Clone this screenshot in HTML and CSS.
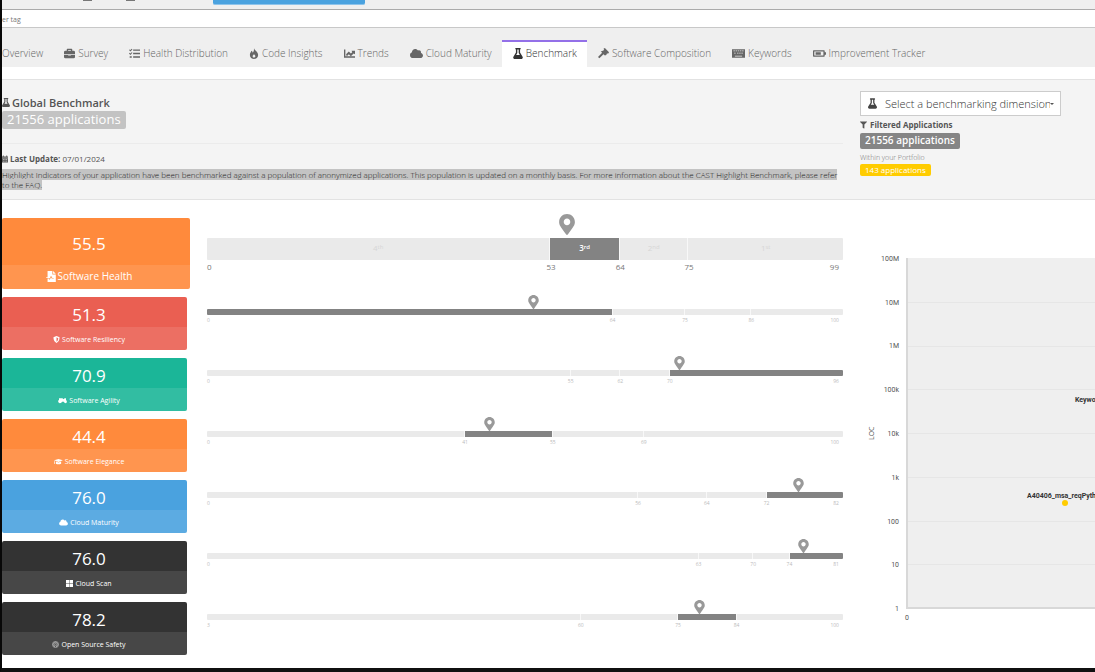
FILE: index.html
```html
<!DOCTYPE html>
<html lang="en">
<head>
    <meta charset="UTF-8">
    <meta name="viewport" content="width=device-width, initial-scale=1.0">
    <title>Benchmark</title>
    <link rel="stylesheet" href="styles.css">
</head>
<body>
  <!-- icons -->
  <svg class="sprite" aria-hidden="true">
    <symbol id="flask" viewBox="0 0 448 512"><path d="M437.2 403.5L320 215V64h8c13.3 0 24-10.7 24-24V24c0-13.3-10.7-24-24-24H120c-13.3 0-24 10.7-24 24v16c0 13.3 10.7 24 24 24h8v151L10.8 403.5C-18.5 450.6 15.3 512 70.9 512h306.2c55.7 0 89.4-61.5 60.1-108.5zM137.9 320l48.2-77.6c3.7-5.2 5.8-11.6 5.8-18.4V64h64v160c0 6.9 2.2 13.2 5.8 18.4l48.2 77.6h-172z"/></symbol>
    <symbol id="cloud" viewBox="0 0 640 512"><path d="M537.6 226.6c4.1-10.7 6.4-22.4 6.4-34.6 0-53-43-96-96-96-19.7 0-38.1 6-53.3 16.2C367 64.2 315.3 32 256 32c-88.4 0-160 71.6-160 160 0 2.7.1 5.4.2 8.1C40.2 219.8 0 273.2 0 336c0 79.5 64.5 144 144 144h368c70.7 0 128-57.3 128-128 0-61.9-44-113.6-102.4-125.4z"/></symbol>
    <symbol id="pin" viewBox="0 0 384 512"><path d="M172.268 501.67C26.97 291.031 0 269.413 0 192 0 85.961 85.961 0 192 0s192 85.961 192 192c0 77.413-26.97 99.031-172.268 309.67-9.535 13.774-29.93 13.773-39.464 0zM192 272c44.183 0 80-35.817 80-80s-35.817-80-80-80-80 35.817-80 80 35.817 80 80 80z"/></symbol>
    <symbol id="filter" viewBox="0 0 512 512"><path d="M487.976 0H24.028C2.71 0-8.047 25.866 7.058 40.971L192 225.941V432c0 7.831 3.821 15.17 10.237 19.662l80 55.98C298.02 518.69 320 507.493 320 487.98V225.941l184.947-184.97C520.021 25.896 509.338 0 487.976 0z"/></symbol>
    <symbol id="briefcase" viewBox="0 0 16 16"><path fill-rule="evenodd" d="M4 4V2q0-1 1-1h6q1 0 1 1v2h2q2 0 2 2v3H0V6q0-2 2-2zM6 4h4V3H6zM0 10h6v1h4v-1h6v3q0 2-2 2H2q-2 0-2-2z"/></symbol>
    <symbol id="tasks" viewBox="0 0 16 16"><path d="M6 2h10v2H6zM6 7h10v2H6zM6 12h10v2H6zM0 3l1-1 1 1 2-2 1 1-3 3zM0 8l1-1 1 1 2-2 1 1-3 3zM1 12h3v2H1z"/></symbol>
    <symbol id="fire" viewBox="0 0 14 16"><path fill-rule="evenodd" d="M7 0c0 3 6 5 6 10 0 4-3 6-6 6s-6-2-6-6c0-3 2-4 2-6 2 1 2 2 2 3 2-2 2-4 2-7zM7 9c-1 1-2 2-2 3 0 3 4 2 4 0 0-1-1-2-2-3z"/></symbol>
    <symbol id="trend" viewBox="0 0 16 16"><path d="M0 2h2v10h14v2H0zM3 9l4-4 3 3 2-2-1-2h5v5l-2-1-4 4-3-3-3 3z"/></symbol>
    <symbol id="hammer" viewBox="0 0 16 16"><path d="M8 1l2-1 6 6-1 2h-2l-1 2-2 1-2-2-6 6-2-2 6-6-2-2 3-1 2-1z"/></symbol>
    <symbol id="keyboard" viewBox="0 0 18 14"><path fill-rule="evenodd" d="M0 1h18v12H0zM2 3v1h2V3zM5 3v1h2V3zM8 3v1h2V3zM11 3v1h2V3zM14 3v1h2V3zM3 6v1h2V6zM7 6v1h2V6zM10 6v1h2V6zM13 6v1h2V6zM4 10v1h10v-1z"/></symbol>
    <symbol id="battery" viewBox="0 0 20 16"><path fill-rule="evenodd" d="M1 3h16q1 0 1 1v2h2v4h-2v2q0 1-1 1H1q-1 0-1-1V4q0-1 1-1zM2 5v6h14V5zM4 6h8v4H4z"/></symbol>
    <symbol id="calendar" viewBox="0 0 14 16"><path fill-rule="evenodd" d="M2 0h2v2h6V0h2v2h2v3H0V2h2zM0 6h14v10H0zM2 8v2h2V8zM6 8v2h2V8zM10 8v2h2V8zM2 12v2h2v-2zM6 12v2h2v-2zM10 12v2h2v-2z"/></symbol>
    <symbol id="report" viewBox="0 0 14 16"><path fill-rule="evenodd" d="M2 0h7v5h5v11H2v-5h2l1 2 2-4 1 2h3v-1H9L7 7l-2 4-1-1H0V9h2zM10 0l4 4h-4z"/></symbol>
    <symbol id="shield" viewBox="0 0 16 16"><path fill-rule="evenodd" d="M8 0l7 3c0 7-3 11-7 13C4 14 1 10 1 3zM8 3v10c3-2 4-5 4-8z"/></symbol>
    <symbol id="bike" viewBox="0 0 20 16"><path d="M2 3h8l2 2 3-2h3v4q2 1 2 4 0 3-3 3-3 0-4-3H9q-1 3-5 3-4-1-4-4 0-3 2-4z"/></symbol>
    <symbol id="cap" viewBox="0 0 20 16"><path d="M0 5l10-3 10 3-10 4zM4 8l6 2 6-2v5q-6 3-12 0zM1 6h1v7H0z"/></symbol>
    <symbol id="scan" viewBox="0 0 16 16"><path d="M0 0h7v7H0zM8 0h8v7H8zM0 8h7v8H0zM8 8h8v8H8z"/></symbol>
    <symbol id="safety" viewBox="0 0 16 16"><circle cx="8" cy="8" r="7" fill="none" stroke="currentColor" stroke-width="1"/><path d="M6 13l1-4a2 2 0 1 1 2 0l1 4 2-2a5 5 0 1 0-8 0z" fill="none" stroke="currentColor" stroke-width="1"/></symbol>
  </svg>

  <header class="topbar">
    <svg class="stub first" viewBox="0 0 9 2"><path d="M0 0h9v1H0z"/></svg>
    <svg class="stub" viewBox="0 0 9 2"><path d="M0 0h9v1H0z"/></svg>
    <button class="top-button" type="button" aria-label="Portfolio"></button>
  </header>

  <input class="tag-filter" type="text" placeholder="er tag" aria-label="Filter per tag">

  <nav class="tabs">
    <a href="#" class="first">Overview</a>
    <a href="#"><svg><use href="#briefcase"/></svg>Survey</a>
    <a href="#"><svg><use href="#tasks"/></svg>Health Distribution</a>
    <a href="#"><svg class="narrow"><use href="#fire"/></svg>Code Insights</a>
    <a href="#"><svg><use href="#trend"/></svg>Trends</a>
    <a href="#"><svg class="wide"><use href="#cloud"/></svg>Cloud Maturity</a>
    <a href="#" class="active"><svg class="narrow"><use href="#flask"/></svg>Benchmark</a>
    <a href="#"><svg><use href="#hammer"/></svg>Software Composition</a>
    <a href="#"><svg class="wide"><use href="#keyboard"/></svg>Keywords</a>
    <a href="#"><svg class="wide"><use href="#battery"/></svg>Improvement Tracker</a>
  </nav>

  <section class="intro columns">
    <div class="intro-main">
      <h1><svg><use href="#flask"/></svg>Global Benchmark</h1>
      <span class="badge light">21556 applications</span>
      <hr>
      <p class="update"><svg><use href="#calendar"/></svg><b>Last Update:</b> 07/01/2024</p>
      <p class="about"><mark>Highlight Indicators of your application have been benchmarked against a population of anonymized applications. This population is updated on a monthly basis. For more information about the CAST Highlight Benchmark, please refer to the FAQ.</mark></p>
    </div>
    <div class="intro-side">
      <div class="dimension">
        <svg><use href="#flask"/></svg>
        <select aria-label="Benchmarking dimension">
          <option>Select a benchmarking dimension</option>
        </select>
        <i class="caret"></i>
      </div>
      <h2><svg><use href="#filter"/></svg>Filtered Applications</h2>
      <span class="badge strong">21556 applications</span>
      <p class="within">Within your Portfolio</p>
      <span class="badge yellow">143 applications</span>
    </div>
  </section>

  <main class="columns">
    <div class="scores">
      <div class="row health">
        <div class="tile orange"><strong>55.5</strong><span><svg><use href="#report"/></svg>Software Health</span></div>
        <div class="gauge">
          <svg class="pin" style="left: 56.6%"><use href="#pin"/></svg>
          <div class="bar"><i style="width: 54%">4<sup>th</sup></i><i class="on" style="width: 10.9%">3<sup>rd</sup></i><i style="width: 10.8%">2<sup>nd</sup></i><i style="width: 24.3%">1<sup>st</sup></i></div>
          <div class="scale"><span style="width: 54%">0</span><span style="width: 10.9%">53</span><span style="width: 10.8%">64</span><span style="width: 24.3%">75<b>99</b></span></div>
        </div>
      </div>
      <div class="row">
        <div class="tile red"><strong>51.3</strong><span><svg><use href="#shield"/></svg>Software Resiliency</span></div>
        <div class="gauge">
          <svg class="pin" style="left: 51.4%"><use href="#pin"/></svg>
          <div class="bar"><i class="on" style="width: 63.8%"></i><i style="width: 11.4%"></i><i style="width: 10.4%"></i><i style="width: 14.4%"></i></div>
          <div class="scale"><span style="width: 63.8%">0</span><span style="width: 11.4%">64</span><span style="width: 10.4%">75</span><span style="width: 14.4%">86<b>100</b></span></div>
        </div>
      </div>
      <div class="row">
        <div class="tile green"><strong>70.9</strong><span><svg class="wide"><use href="#bike"/></svg>Software Agility</span></div>
        <div class="gauge">
          <svg class="pin" style="left: 74.4%"><use href="#pin"/></svg>
          <div class="bar"><i style="width: 57.2%"></i><i style="width: 7.8%"></i><i style="width: 7.8%"></i><i class="on" style="width: 27.2%"></i></div>
          <div class="scale"><span style="width: 57.2%">0</span><span style="width: 7.8%">55</span><span style="width: 7.8%">62</span><span style="width: 27.2%">70<b>96</b></span></div>
        </div>
      </div>
      <div class="row">
        <div class="tile orange"><strong>44.4</strong><span><svg class="wide"><use href="#cap"/></svg>Software Elegance</span></div>
        <div class="gauge">
          <svg class="pin" style="left: 44.5%"><use href="#pin"/></svg>
          <div class="bar"><i style="width: 40.6%"></i><i class="on" style="width: 13.8%"></i><i style="width: 14.3%"></i><i style="width: 31.3%"></i></div>
          <div class="scale"><span style="width: 40.6%">0</span><span style="width: 13.8%">41</span><span style="width: 14.3%">55</span><span style="width: 31.3%">69<b>100</b></span></div>
        </div>
      </div>
      <div class="row">
        <div class="tile blue"><strong>76.0</strong><span><svg class="wide"><use href="#cloud"/></svg>Cloud Maturity</span></div>
        <div class="gauge">
          <svg class="pin" style="left: 93.1%"><use href="#pin"/></svg>
          <div class="bar"><i style="width: 67.8%"></i><i style="width: 10.8%"></i><i style="width: 9.4%"></i><i class="on" style="width: 12%"></i></div>
          <div class="scale"><span style="width: 67.8%">0</span><span style="width: 10.8%">56</span><span style="width: 9.4%">64</span><span style="width: 12%">72<b>82</b></span></div>
        </div>
      </div>
      <div class="row">
        <div class="tile dark"><strong>76.0</strong><span><svg><use href="#scan"/></svg>Cloud Scan</span></div>
        <div class="gauge">
          <svg class="pin" style="left: 93.8%"><use href="#pin"/></svg>
          <div class="bar"><i style="width: 77.3%"></i><i style="width: 8.6%"></i><i style="width: 5.7%"></i><i class="on" style="width: 8.4%"></i></div>
          <div class="scale"><span style="width: 77.3%">0</span><span style="width: 8.6%">63</span><span style="width: 5.7%">70</span><span style="width: 8.4%">74<b>81</b></span></div>
        </div>
      </div>
      <div class="row">
        <div class="tile dark"><strong>78.2</strong><span><svg><use href="#safety"/></svg>Open Source Safety</span></div>
        <div class="gauge">
          <svg class="pin" style="left: 77.5%"><use href="#pin"/></svg>
          <div class="bar"><i style="width: 58.8%"></i><i style="width: 15.3%"></i><i class="on" style="width: 9.2%"></i><i style="width: 16.7%"></i></div>
          <div class="scale"><span style="width: 58.8%">3</span><span style="width: 15.3%">60</span><span style="width: 9.2%">75</span><span style="width: 16.7%">84<b>100</b></span></div>
        </div>
      </div>
    </div>

    <svg class="chart" role="img" aria-label="LOC chart">
      <rect class="plot" x="47" y="40" width="100%" height="350"/>
      <g class="grid">
        <path d="M47 84.500h2000M47 128.500h2000M47 171.500h2000M47 215.500h2000M47 259.500h2000M47 303.500h2000M47 346.500h2000"/>
      </g>
      <path class="axis" d="M47 40v350h2000"/>
      <g class="ticks">
        <text x="39" y="43">100M</text>
        <text x="39" y="87">10M</text>
        <text x="39" y="130">1M</text>
        <text x="39" y="174">100k</text>
        <text x="39" y="218">10k</text>
        <text x="39" y="262">1k</text>
        <text x="39" y="306">100</text>
        <text x="39" y="349">10</text>
        <text x="39" y="393">1</text>
        <text x="49" y="402">0</text>
      </g>
      <text class="axis-name" transform="translate(14 222) rotate(-90)">LOC</text>
      <g class="points">
        <text x="215" y="184">Keywords</text>
        <text x="167" y="280">A40406_msa_reqPython</text>
        <circle cx="205" cy="285" r="3"/>
      </g>
    </svg>
  </main>
</body>
</html>
```
FILE: styles.css
```css
*{
    box-sizing: border-box;
}
body{
    margin: 0;
    min-height: 100vh;
    border-left: 2px solid #080808;
    border-bottom: 4px solid #101010;
    background-color: #fff;
    color: #555;
    font-family: "Open Sans", sans-serif;
    font-size: 11px;
    overflow-x: hidden;
}
h1, h2, p{
    margin: 0;
}
svg{
    fill: currentColor;
    flex: none;
}
.sprite{
    display: none;
}

/* top bar */
.topbar{
    display: flex;
    align-items: flex-start;
    height: 10px;
    background-color: #efefef;
    border-bottom: 1px solid #aaa;
}
.stub{
    width: 9px;
    height: 2px;
    margin-right: 34px;
    color: #777;
}
.stub.first{
    margin-left: 81px;
}
.stub + .top-button{
    margin-left: 44px;
}
.top-button{
    width: 152px;
    height: 5px;
    padding: 0;
    border: none;
    border-bottom: 1px solid #8dc3ea;
    border-radius: 0 0 2px 2px;
    background-color: #4aa2df;
}
.tag-filter{
    display: block;
    width: 100%;
    height: 18px;
    padding: 2px 0 0;
    border: none;
    border-bottom: 1px solid #c8c8c8;
    font-family: inherit;
    font-size: 7px;
    color: #777;
}
.tag-filter::placeholder{
    color: #777;
}

/* tabs */
.tabs{
    display: flex;
    height: 39px;
    padding-top: 12px;
    background-color: #efefef;
    font-size: 10px;
    white-space: nowrap;
}
.tabs a{
    display: flex;
    align-items: center;
    gap: 3px;
    padding: 0 10px 3px 11px;
    border-top: 2px solid transparent;
    color: #666;
    font-weight: 300;
    text-decoration: none;
}
.tabs a.first{
    padding-left: 0;
}
.tabs a.active{
    border-top-color: #9370e8;
    background-color: #fff;
    color: #333;
}
.tabs svg{
    width: 11px;
    height: 11px;
}
.tabs svg.narrow{
    width: 10px;
}
.tabs svg.wide{
    width: 13px;
}

.columns{
    display: grid;
    grid-template-columns: minmax(0, 1fr) 235px;
    column-gap: 17px;
}

/* intro panel */
.intro{
    height: 121px;
    margin-top: 12px;
    border-top: 1px solid #e2e2e2;
    border-bottom: 1px solid #e2e2e2;
    background-color: #f4f4f4;
}
.intro-main{
    padding-top: 15px;
}
.intro h1{
    display: flex;
    align-items: center;
    gap: 2px;
    height: 16px;
    padding-bottom: 2px;
    font-size: 11px;
    font-weight: 600;
}
.intro h1 svg{
    width: 8px;
    height: 11px;
}
.badge{
    display: block;
    width: fit-content;
    height: 16px;
    padding: 0 5px;
    border-radius: 2px;
    background-color: #858585;
    color: #fff;
    font-size: 10px;
    line-height: 15px;
}
.badge.strong{
    font-weight: 600;
}
.badge.light{
    height: 18px;
    background-color: #c3c3c3;
    font-size: 13px;
    line-height: 17px;
}
.badge.yellow{
    height: 12px;
    background-color: #fc0;
    font-size: 8px;
    line-height: 11px;
}
.intro hr{
    margin: 14px 0 9px;
    border: none;
    border-top: 1px solid #ebebeb;
}
.update{
    height: 12px;
    font-size: 8px;
    line-height: 12px;
}
.update svg{
    width: 6px;
    height: 8px;
    margin-right: 2px;
    vertical-align: -1px;
}
.about{
    margin-top: 5px;
    font-size: 8px;
    font-weight: 300;
    line-height: 10px;
}
.about mark{
    background-color: #c3c3c3;
    color: #222;
}
.intro-side{
    padding-top: 11px;
}
.dimension{
    display: flex;
    align-items: center;
    width: 201px;
    height: 25px;
    padding: 0 6px 0 7px;
    border: 1px solid #ccc;
    background-color: #fff;
}
.dimension svg{
    width: 9px;
    height: 11px;
    color: #444;
}
.dimension select{
    flex: 1;
    min-width: 0;
    margin-left: 8px;
    padding: 0;
    border: none;
    background: none;
    appearance: none;
    color: #333;
    font-family: inherit;
    font-size: 11px;
    font-weight: 300;
}
.caret{
    border: 2px solid transparent;
    border-top-color: #555;
    border-bottom: none;
}
.intro h2{
    display: flex;
    align-items: center;
    gap: 3px;
    height: 17px;
    font-size: 8px;
}
.intro h2 svg{
    width: 7px;
    height: 8px;
}
.within{
    height: 15px;
    color: #777;
    font-size: 7px;
    font-weight: 300;
    line-height: 18px;
}

/* score rows */
.scores{
    padding-top: 18px;
}
.row{
    display: flex;
    height: 53px;
    margin-bottom: 8px;
}
.row.health{
    height: 71px;
}
.tile{
    display: flex;
    flex-direction: column;
    flex: none;
    width: 185px;
    margin-right: 20px;
    border-radius: 2px;
    color: #fff;
    text-align: center;
    overflow: hidden;
}
.tile strong{
    flex: 1;
    padding: 6px 11px 0 0;
    font-size: 17px;
    font-weight: 500;
    line-height: 24px;
}
.tile span{
    display: flex;
    align-items: center;
    justify-content: center;
    gap: 2px;
    height: 23px;
    padding: 2px 11px 0 0;
    background-color: rgba(255, 255, 255, 0.1);
    font-size: 7px;
}
.tile svg{
    width: 7px;
    height: 7px;
}
.tile svg.wide{
    width: 9px;
}
.health .tile{
    width: 188px;
    margin-right: 17px;
}
.health strong{
    padding: 14px 14px 0 0;
}
.health .tile span{
    height: 24px;
    padding: 0 14px 2px 0;
    font-size: 10px;
}
.health .tile svg{
    width: 10px;
    height: 11px;
}
.orange{
    background-color: #ff8a3c;
}
.red{
    background-color: #ea5f52;
}
.green{
    background-color: #1bb698;
}
.blue{
    background-color: #4aa2df;
}
.dark{
    background-color: #333;
}

/* gauges */
.gauge{
    position: relative;
    flex: 1;
    padding-top: 12px;
}
.health .gauge{
    padding-top: 20px;
}
.pin{
    position: absolute;
    top: -2px;
    width: 11px;
    height: 14px;
    margin-left: -6px;
    color: #999;
}
.health .pin{
    top: -4px;
    width: 16px;
    height: 21px;
    margin-left: -8px;
}
.bar{
    display: flex;
    height: 6px;
    border-radius: 1px;
    overflow: hidden;
}
.health .bar{
    height: 22px;
}
.bar i{
    border-right: 1px solid #f8f8f8;
    background-color: #eaeaea;
    color: #d6d6d6;
    font-size: 8px;
    font-style: normal;
    line-height: 20px;
    text-align: center;
}
.bar i:last-child{
    border-right: none;
}
.bar .on{
    background-color: #838383;
    color: #fff;
    font-weight: 600;
}
.bar sup{
    font-size: 6px;
    line-height: 0;
    vertical-align: 2px;
}
.scale{
    display: flex;
    color: #bbb;
    font-size: 5px;
    line-height: 10px;
}
.scale span{
    display: flex;
    justify-content: space-between;
    text-indent: -3px;
}
.scale span:first-child{
    text-indent: 0;
}
.scale b{
    margin-right: 4px;
    font-weight: 400;
    text-indent: 0;
}
.health .scale{
    color: #777;
    font-size: 8px;
    line-height: 14px;
}
.health .scale span{
    text-indent: -4px;
}
.health .scale span:first-child,
.health .scale b{
    text-indent: 0;
}

/* chart */
.chart{
    width: 100%;
    height: 410px;
    margin-top: 18px;
}
.plot{
    fill: #efefef;
}
.grid path{
    stroke: #e6e6e6;
}
.axis{
    fill: none;
    stroke: #d8d8d8;
    stroke-width: 2px;
}
.ticks text{
    fill: #555;
    font-family: Roboto, sans-serif;
    font-size: 7px;
    text-anchor: end;
}
.axis-name{
    fill: #555;
    font-size: 7px;
}
.points text{
    fill: #333;
    font-family: Roboto, sans-serif;
    font-size: 7px;
    font-weight: 700;
}
.points circle{
    fill: #fc0;
}
```
